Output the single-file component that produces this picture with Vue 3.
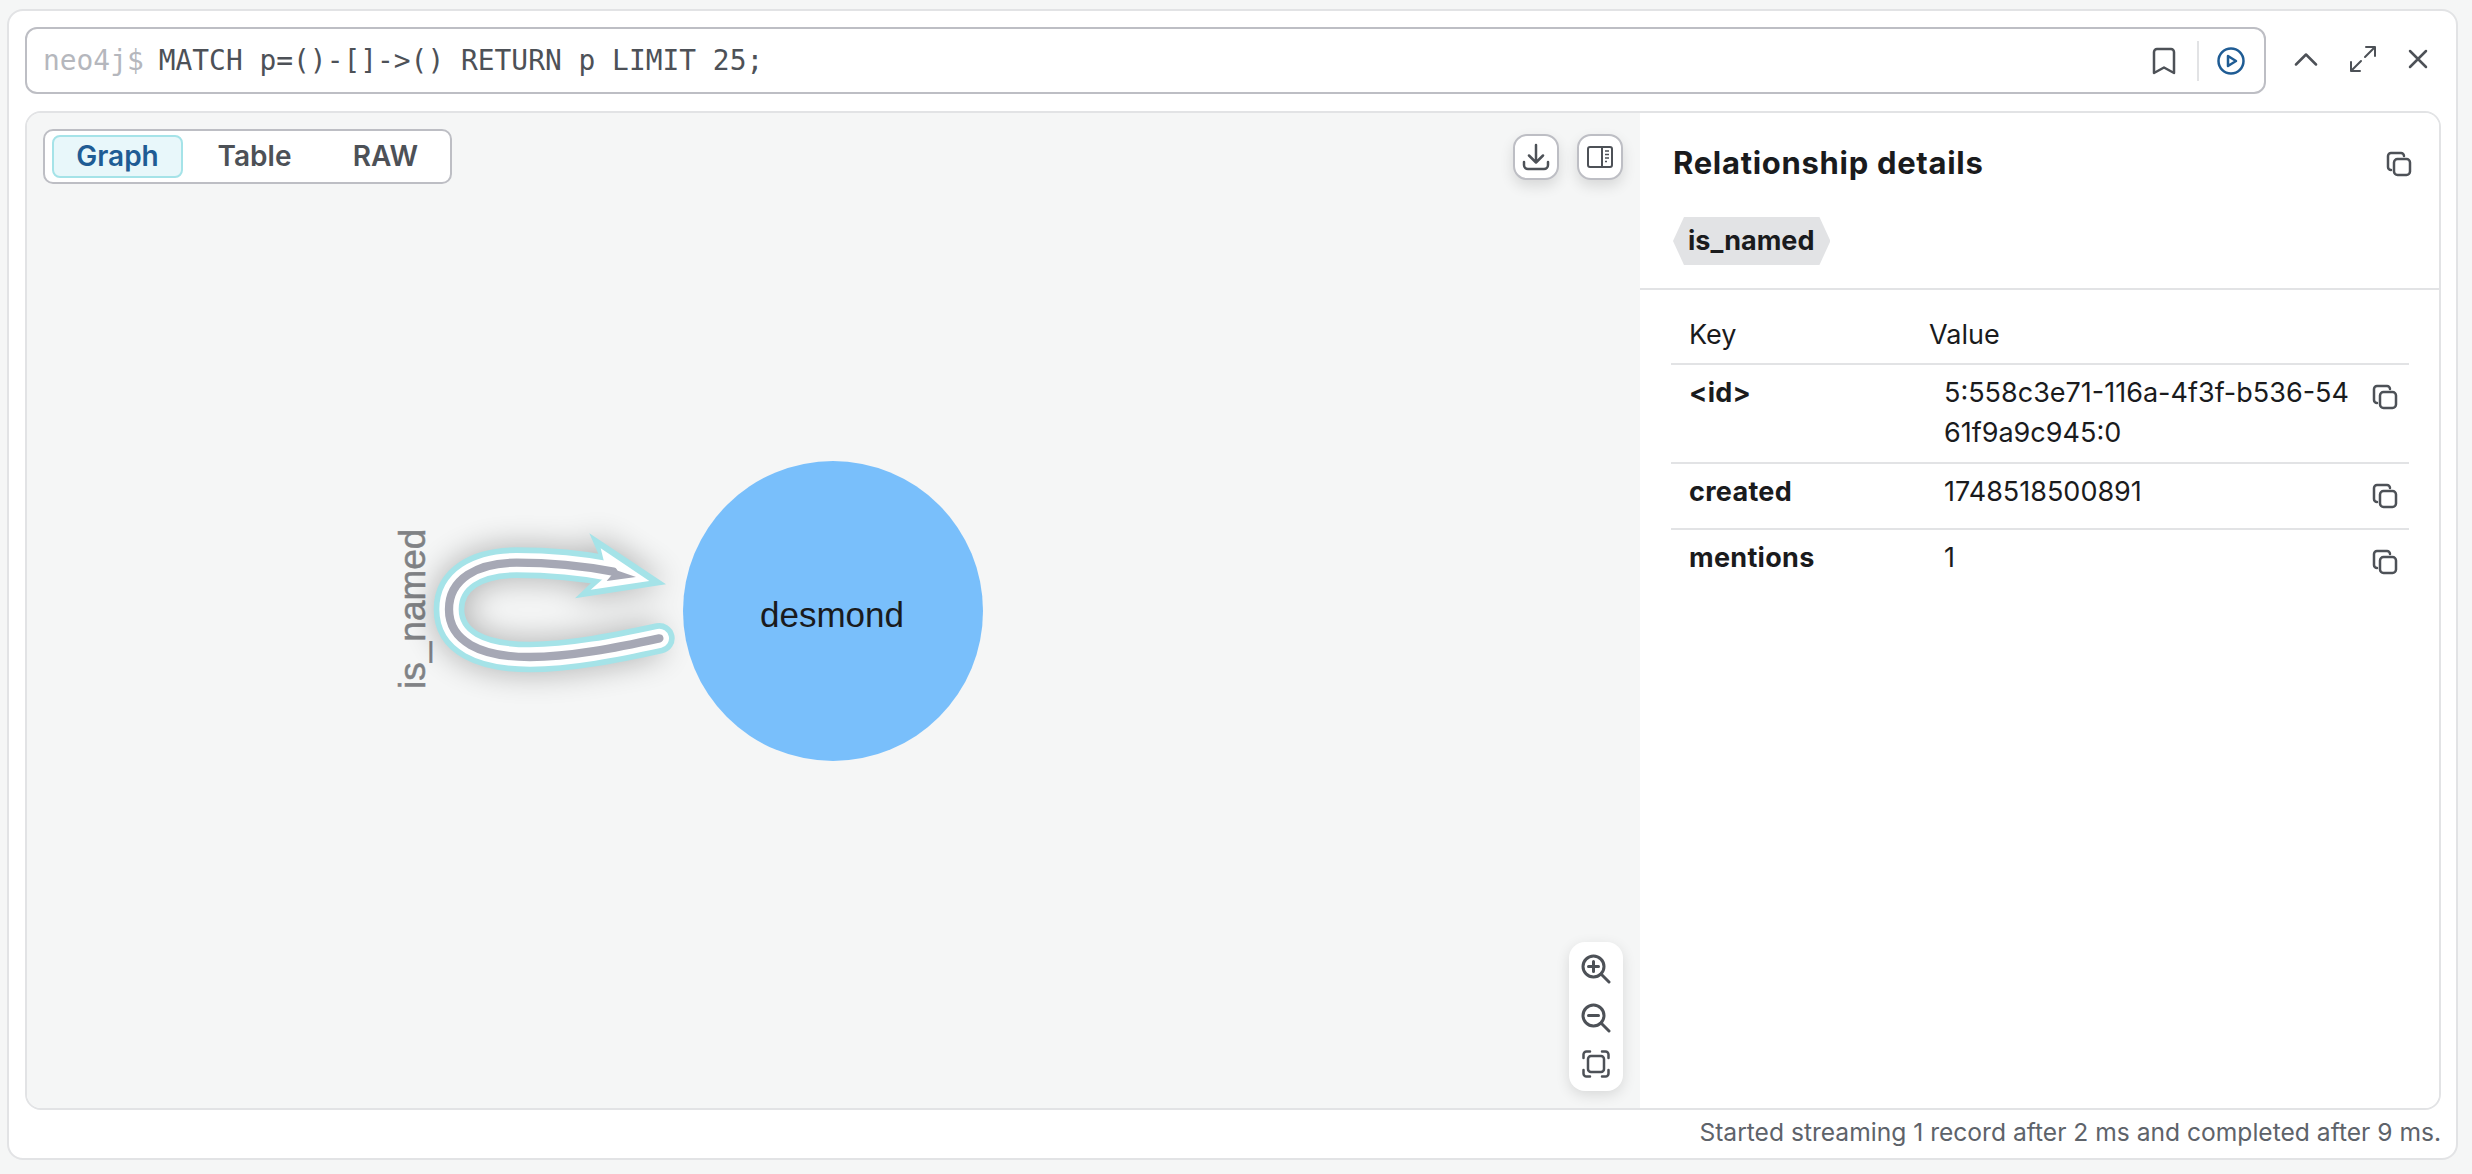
<script setup>
const rows = [
  { key: '<id>', value: '5:558c3e71-116a-4f3f-b536-5461f9a9c945:0' },
  { key: 'created', value: '1748518500891' },
  { key: 'mentions', value: '1' },
]
const tabs = ['Graph', 'Table', 'RAW']
const curve = 'M868 412C740 440 600 468 480 468C330 468 237 420 237 325C237 235 320 185 440 185C540 185 640 195 730 212'
</script>

<template>
  <div class="page">
    <div class="card">
      <div class="top">
        <div class="editor">
          <span class="prompt">neo4j$</span>
          <span class="query">MATCH p=()-[]->() RETURN p LIMIT 25;</span>
          <svg class="bookmark" width="24" height="28" viewBox="0 0 24 28">
            <path d="M2 26V5a3 3 0 0 1 3-3h14a3 3 0 0 1 3 3v21l-10-5.500z" />
          </svg>
          <span class="divider"></span>
          <svg class="play" width="28" height="28" viewBox="0 0 28 28">
            <circle cx="14" cy="14" r="12.500" />
            <path d="M11 9l8 5-8 5z" />
          </svg>
        </div>
        <div class="frame-actions">
          <svg class="ico" width="24" height="14" viewBox="0 0 24 14"><path d="M2 12.500L12 2.500l10 10" /></svg>
          <svg class="ico thin" width="28" height="28" viewBox="0 0 28 28">
            <path d="M17 2h9v9M26 2L16 12M11 26H2v-9M2 26l10-10" />
          </svg>
          <svg class="ico" width="20" height="20" viewBox="0 0 20 20"><path d="M2 2l16 16M18 2L2 18" /></svg>
        </div>
      </div>

      <div class="result">
        <div class="graph">
          <svg class="canvas" width="1613" height="995" viewBox="27 112 1613 995">
            <defs>
              <filter id="soft" x="-50%" y="-80%" width="200%" height="260%">
                <feGaussianBlur stdDeviation="48" />
              </filter>
            </defs>
            <circle cx="833" cy="610" r="150" fill="#79bffb" />
            <text class="node-label" x="832" y="626" text-anchor="middle">desmond</text>
            <text class="rel-label" transform="translate(425 688) rotate(-90)">is_named</text>
            <g transform="translate(370 500) scale(.33333)">
              <g filter="url(#soft)" opacity=".3">
                <path :d="curve" fill="none" stroke="#000" stroke-width="92" />
                <path d="M658 97L888 250L615 292L675 235L690 170z" fill="#000" />
              </g>
              <path :d="curve" fill="none" stroke="#a5e3e8" stroke-width="92" stroke-linecap="round" />
              <path d="M658 97L888 250L615 292L675 235L690 170z" fill="#a5e3e8" />
              <path :d="curve" fill="none" stroke="#fff" stroke-width="58" stroke-linecap="round" />
              <path d="M692 142L838 240L662 266L712 222z" fill="#fff" />
              <path :d="curve" fill="none" stroke="#a6a8b5" stroke-width="25" stroke-linecap="round" />
              <path d="M722 202L798 228L710 240L732 214z" fill="#a6a8b5" />
            </g>
          </svg>

          <div class="tabs">
            <button v-for="(tab, i) in tabs" :key="tab" class="tab" :class="{ active: i === 0 }">{{ tab }}</button>
          </div>

          <div class="graph-actions">
            <button class="square">
              <svg class="ico" width="28" height="28" viewBox="0 0 28 28">
                <path d="M14 2v17M7 12.500l7 7 7-7M2 19v3a4 4 0 0 0 4 4h16a4 4 0 0 0 4-4v-3" />
              </svg>
            </button>
            <button class="square">
              <svg class="ico slim" width="26" height="22" viewBox="0 0 26 22">
                <rect x="1" y="1" width="24" height="20" rx="2" />
                <path d="M15 1v20" />
                <path class="fine" d="M18 5h4M18 8.500h4M18 12h4M18 15.500h2" />
              </svg>
            </button>
          </div>

          <div class="zoom-box">
            <svg class="ico" width="30" height="30" viewBox="0 0 30 30">
              <circle cx="12.500" cy="12.500" r="10.500" />
              <path d="M20 20l8 8M12.500 7.500v10M7.500 12.500h10" />
            </svg>
            <svg class="ico" width="30" height="30" viewBox="0 0 30 30">
              <circle cx="12.500" cy="12.500" r="10.500" />
              <path d="M20 20l8 8M7.500 12.500h10" />
            </svg>
            <svg class="ico fit" width="28" height="28" viewBox="0 0 28 28">
              <rect x="6" y="6" width="16" height="16" rx="3" />
              <path d="M1.500 8V4.500a3 3 0 0 1 3-3H8M20 1.500h3.500a3 3 0 0 1 3 3V8M26.500 20v3.500a3 3 0 0 1-3 3H20M8 26.500H4.500a3 3 0 0 1-3-3V20" />
            </svg>
          </div>
        </div>

        <aside class="details">
          <div class="details-head">
            <h3>Relationship details</h3>
            <svg class="ico copy big" width="26" height="26" viewBox="0 0 26 26">
              <path d="M5 19a3 3 0 0 1-3-3V5a3 3 0 0 1 3-3h10a3 3 0 0 1 3 3" />
              <rect x="8" y="8" width="16" height="16" rx="3.500" />
            </svg>
          </div>
          <div class="chip-row"><span class="chip">is_named</span></div>
          <div class="table">
            <div class="row head">
              <div class="k">Key</div>
              <div class="v">Value</div>
            </div>
            <div v-for="row in rows" :key="row.key" class="row">
              <div class="k strong">{{ row.key }}</div>
              <div class="v val">{{ row.value }}</div>
              <svg class="ico copy" width="26" height="26" viewBox="0 0 26 26">
                <path d="M5 19a3 3 0 0 1-3-3V5a3 3 0 0 1 3-3h10a3 3 0 0 1 3 3" />
                <rect x="8" y="8" width="16" height="16" rx="3.500" />
              </svg>
            </div>
          </div>
        </aside>
      </div>

      <div class="status">Started streaming 1 record after 2 ms and completed after 9 ms.</div>
    </div>
  </div>
</template>

<style>
html, body {
  margin: 0;
  background: #f5f6f6;
}
</style>

<style scoped>
.page {
  height: 1174px;
  box-sizing: border-box;
  padding: 9px 14px 14px 7px;
  font-family: Inter, "Liberation Sans", sans-serif;
  color: #1a1b1d;
}

.card {
  height: 100%;
  box-sizing: border-box;
  background: #fff;
  border: 2px solid #e2e3e5;
  border-radius: 16px;
  padding: 16px 15px 0 16px;
  display: flex;
  flex-direction: column;
}

.top {
  display: flex;
  align-items: center;
  height: 67px;
  flex: none;
}

.editor {
  flex: none;
  width: 2241px;
  height: 100%;
  box-sizing: border-box;
  border: 2px solid #bdbec4;
  border-radius: 12px;
  display: flex;
  align-items: center;
  padding: 0 19px 0 16px;
  font-family: "DejaVu Sans Mono", "Liberation Mono", monospace;
  font-size: 27.900px;
  white-space: pre;
}

.prompt {
  color: #b5b7bd;
  margin-right: 15px;
}

.query {
  color: #4d5157;
  flex: 1;
}

.bookmark path {
  fill: none;
  stroke: #4d5157;
  stroke-width: 2.500;
  stroke-linejoin: round;
}

.divider {
  width: 2px;
  height: 40px;
  background: #e2e3e5;
  margin: 0 18px 0 21px;
}

.play circle {
  fill: none;
  stroke: #1f5c94;
  stroke-width: 2.500;
}

.play path {
  fill: none;
  stroke: #1f5c94;
  stroke-width: 2.500;
  stroke-linejoin: round;
}

.frame-actions {
  flex: 1;
  display: flex;
  align-items: center;
  gap: 31px;
  padding-left: 28px;
  position: relative;
  top: -2px;
}

.ico {
  flex: none;
  fill: none;
  stroke: #4d5157;
  stroke-width: 2.500;
  stroke-linecap: round;
  stroke-linejoin: round;
}

.ico.thin {
  stroke-width: 2;
}

.result {
  flex: 1;
  min-height: 0;
  margin-top: 17px;
  border: 2px solid #e2e3e5;
  border-radius: 16px;
  display: flex;
  overflow: hidden;
}

.graph {
  position: relative;
  flex: none;
  width: 1613px;
  background: #f5f6f6;
}

.canvas {
  position: absolute;
  left: 0;
  top: 0;
}

.node-label {
  font-family: "Liberation Sans", sans-serif;
  font-size: 35px;
  fill: #1a1b1d;
}

.rel-label {
  font-family: "Liberation Sans", sans-serif;
  font-size: 37px;
  fill: #808285;
  stroke: #808285;
  stroke-width: .5;
}

.tabs {
  position: absolute;
  left: 16px;
  top: 16px;
  width: 409px;
  height: 55px;
  box-sizing: border-box;
  background: #fff;
  border: 2px solid #bdbec4;
  border-radius: 10px;
  display: flex;
  align-items: center;
  padding: 0 7px;
}

.tab {
  flex: none;
  border: 2px solid transparent;
  background: none;
  border-radius: 8px;
  height: 43px;
  width: 131px;
  padding: 0 0 2px;
  font: 600 28px Inter, "Liberation Sans", sans-serif;
  color: #4d5157;
}

.tab:nth-child(2) {
  margin-left: 6px;
}

.tab.active {
  background: #e8f7fa;
  border-color: #a5e3e8;
  color: #1f5c94;
}

.graph-actions {
  position: absolute;
  left: 1486px;
  top: 21px;
  display: flex;
  gap: 18px;
}

.square {
  width: 46px;
  height: 46px;
  box-sizing: border-box;
  padding: 0;
  background: #fff;
  border: 2px solid #bdbec4;
  border-radius: 14px;
  box-shadow: 0 6px 14px rgba(0, 0, 0, .12);
  display: flex;
  align-items: center;
  justify-content: center;
}

.ico.slim {
  stroke-width: 2;
  stroke-linecap: butt;
}

.ico .fine {
  stroke-width: 1.500;
}

.zoom-box {
  position: absolute;
  left: 1542px;
  top: 829px;
  width: 54px;
  height: 149px;
  box-sizing: border-box;
  background: #fff;
  border-radius: 16px;
  box-shadow: 0 4px 14px rgba(0, 0, 0, .12);
  display: flex;
  flex-direction: column;
  align-items: center;
  padding-top: 12px;
  gap: 19px;
}

.zoom-box .ico {
  stroke-width: 3;
}

.zoom-box .fit {
  margin-top: -2px;
  stroke-width: 2.500;
}

.details {
  flex: 1;
  min-width: 0;
  background: #fff;
  display: flex;
  flex-direction: column;
}

.details-head {
  height: 70px;
  display: flex;
  align-items: flex-end;
  justify-content: space-between;
  padding: 0 27px 0 33px;
}

.details-head h3 {
  margin: 0 0 2px;
  font-size: 31px;
  font-weight: 700;
  letter-spacing: .7px;
  line-height: 36px;
}

.details-head .copy {
  align-self: flex-start;
  margin-top: 38px;
}

.chip-row {
  height: 107px;
  box-sizing: border-box;
  border-bottom: 2px solid #e2e3e5;
  padding: 34px 0 0 33px;
}

.chip {
  display: inline-block;
  height: 48px;
  line-height: 48px;
  padding: 0 16px 0 15px;
  font-size: 27px;
  font-weight: 700;
  background: #e2e3e5;
  clip-path: polygon(11px 0, calc(100% - 11px) 0, 100% 50%, calc(100% - 11px) 100%, 11px 100%, 0 50%);
}

.table {
  margin: 0 30px 0 31px;
}

.row {
  display: flex;
  align-items: flex-start;
  box-sizing: border-box;
  min-height: 66px;
  border-bottom: 2px solid #e2e3e5;
  font-size: 27px;
  line-height: 40px;
  padding: 8px 0 9px;
}

.row:last-child {
  border-bottom: none;
}

.row.head {
  padding: 25px 0 8px;
}

.k {
  width: 240px;
  flex: none;
  padding-left: 18px;
  box-sizing: border-box;
}

.strong {
  font-weight: 700;
  letter-spacing: .3px;
}

.val {
  width: 420px;
  margin-left: 33px;
  margin-right: 8px;
  word-break: break-all;
}

.head .v {
  margin-left: 18px;
}

.row .copy {
  margin-top: 11px;
}

.status {
  flex: none;
  height: 48px;
  box-sizing: border-box;
  padding-bottom: 5px;
  display: flex;
  align-items: center;
  justify-content: flex-end;
  font-size: 24.600px;
  color: #5e636a;
}
</style>
